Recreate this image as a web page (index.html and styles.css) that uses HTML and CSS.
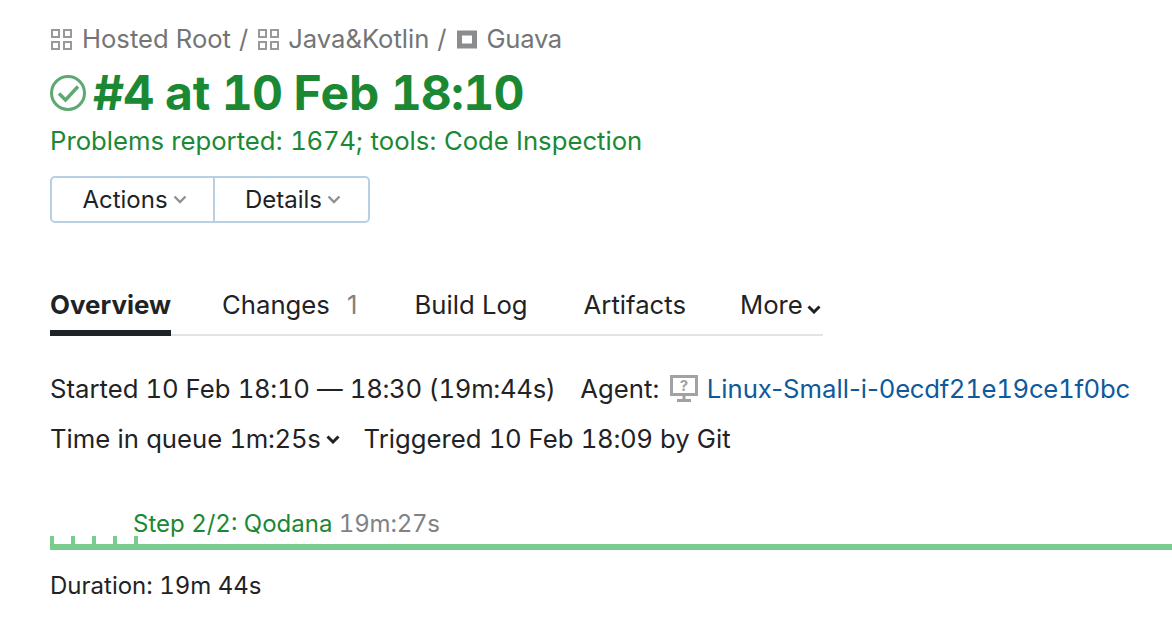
FILE: index.html
```html
<!DOCTYPE html>
<html lang="en">
<head>
<meta charset="utf-8">
<title>Guava #4</title>
<link rel="stylesheet" href="styles.css">
</head>
<body>
<main class="page">
  <nav class="crumbs">
    <svg class="crumb-icon" viewBox="0 0 21 21"><path class="grid-icon" d="M1 1h7v7H1zM13 1h7v7h-7zM1 13h7v7H1zM13 13h7v7h-7z"/></svg>
    <span>Hosted Root</span><span class="sep">/</span>
    <svg class="crumb-icon" viewBox="0 0 21 21"><path class="grid-icon" d="M1 1h7v7H1zM13 1h7v7h-7zM1 13h7v7H1zM13 13h7v7h-7z"/></svg>
    <span>Java&amp;Kotlin</span><span class="sep">/</span>
    <svg class="crumb-icon" viewBox="0 0 21 21"><rect class="box-icon" x="2.500" y="4" width="15" height="13"/></svg>
    <span class="crumb-last">Guava</span>
  </nav>
  <h1 class="title">
    <svg class="status-icon" viewBox="0 0 36 36"><circle cx="18" cy="18" r="16.500" class="status-ring"/><path class="status-check" d="M9 18.500l6.500 6.500L28 11.500"/></svg>
    <span><span class="big-num">#4</span> at <span class="big-num">10</span> Feb <span class="big-num">18:10</span></span>
  </h1>
  <p class="status-text">Problems reported: <span class="num">1674</span>; tools: Code Inspection</p>
  <div class="btn-group">
    <button class="btn btn-first">Actions<svg class="caret caret-grey" viewBox="0 0 14 9"><path d="M1.500 1.500L7 7l5.500-5.500"/></svg></button>
    <button class="btn btn-last">Details<svg class="caret caret-grey" viewBox="0 0 14 9"><path d="M1.500 1.500L7 7l5.500-5.500"/></svg></button>
  </div>
  <div class="tabs">
    <a class="tab tab-active">Overview</a>
    <a class="tab">Changes <span class="count">1</span></a>
    <a class="tab tab-log">Build Log</a>
    <a class="tab tab-artifacts">Artifacts</a>
    <a class="tab tab-more">More<svg class="caret caret-dark" viewBox="0 0 14 9"><path d="M1.500 1.500L7 7l5.500-5.500"/></svg></a>
  </div>
  <div class="info-row info-first">
    <span class="started">Started <span class="num">10</span> Feb <span class="num">18:10</span> — <span class="num">18:30</span> (<span class="num">19m:44s</span>)</span>
    <span>Agent:</span>
    <svg class="agent-icon" viewBox="0 0 28 28"><path class="agent-frame" d="M1.500 1.500h25v18h-25z"/><path class="agent-stand" d="M12.500 20h3v4h-3zM7 24h14v3H7z"/><text x="14" y="16" class="agent-q">?</text></svg>
    <a class="link">Linux-Small-i-<span class="num">0ecdf21e19ce1f0bc</span></a>
  </div>
  <div class="info-row info-second">
    <span class="queue">Time in queue <span class="num">1m:25s</span><svg class="caret caret-dark" viewBox="0 0 14 9"><path d="M1.500 1.500L7 7l5.500-5.500"/></svg></span>
    <span>Triggered <span class="num">10</span> Feb <span class="num">18:09</span> by Git</span>
  </div>
  <div class="timeline">
    <div class="step-label"><span class="step-name">Step 2/2: Qodana</span> <span class="step-time">19m:27s</span></div>
    <div class="ticks"><i></i><i></i><i></i><i></i><i></i></div>
    <div class="bar"></div>
  </div>
  <p class="duration">Duration: 19m 44s</p>
</main>
</body>
</html>
```
FILE: styles.css
```css
* { box-sizing: border-box; }
html, body { margin: 0; background: #fff; }
body {
  font-family: Inter, "Liberation Sans", sans-serif;
  font-size: 25.700px;
  line-height: 32px;
  color: #1f2326;
  overflow: hidden;
  height: 642px;
}
.page { padding: 23px 0 0 50px; }
.num { font-variant-numeric: tabular-nums; letter-spacing: -0.300px; }
.crumbs {
  display: flex;
  align-items: center;
  height: 32px;
  gap: 8px;
  color: #737577;
  font-size: 25.600px;
}
.crumb-icon { width: 21px; height: 21px; flex: none; margin-left: 2px; margin-right: 1px; }
.crumb-icon:first-child { margin-left: 1px; margin-right: 2px; }
.crumb-last { letter-spacing: -0.300px; }
.grid-icon { fill: none; stroke: #97999b; stroke-width: 2; }
.box-icon { fill: none; stroke: #8a8c8e; stroke-width: 5; }
.title {
  display: flex;
  align-items: center;
  margin: 7px 0 0;
  font-size: 48px;
  line-height: 62px;
  font-weight: 700;
  color: #1b8833;
  gap: 7px;
}
.big-num { font-variant-numeric: tabular-nums; letter-spacing: -0.800px; }
.status-icon { width: 36px; height: 36px; flex: none; }
.status-ring { fill: none; stroke: #5fa872; stroke-width: 3; }
.status-check { fill: none; stroke: #5fa872; stroke-width: 3.500; }
.status-text { margin: -1px 0 0; color: #1b8833; height: 35px; line-height: 35px; }
.btn-group { display: flex; margin-top: 18px; width: 320px; height: 47px; font-size: 24px; }
.btn {
  font: inherit;
  color: inherit;
  background: #fff;
  border: 2px solid #b7d0e3;
  display: flex;
  align-items: center;
  justify-content: center;
  gap: 5px;
  padding: 0 0 0 4px;
}
.btn-first { width: 165px; border-radius: 5px 0 0 5px; }
.btn-last { width: 155px; border-left: 0; border-radius: 0 5px 5px 0; padding-left: 3px; }
.caret { width: 14px; height: 9px; flex: none; fill: none; }
.caret-grey { stroke: #8f9193; stroke-width: 2.400; }
.caret-dark { stroke: #1f2326; stroke-width: 3; }
.tabs {
  display: flex;
  width: 773px;
  margin-top: 57px;
  height: 56px;
  border-bottom: 2px solid #e1e3e6;
  gap: 51px;
}
.tab { height: 56px; padding-top: 9px; white-space: nowrap; }
.tab-active { font-weight: 700; font-size: 25.900px; border-bottom: 6px solid #1f2326; }
.tab-log { margin-left: 6px; }
.tab-artifacts { margin-left: 5px; }
.tab-more { display: flex; align-items: baseline; gap: 4px; margin-left: 3px; }
.count { color: #808285; margin-left: 10px; }
.info-row { display: flex; align-items: center; height: 32px; white-space: nowrap; }
.info-first { margin-top: 37px; }
.info-second { margin-top: 18px; }
.started { margin-right: 25px; }
.agent-icon { width: 28px; height: 28px; flex: none; margin: 0 9px 0 10px; }
.agent-frame { fill: none; stroke: #a0a2a4; stroke-width: 3; }
.agent-stand { fill: #a0a2a4; }
.agent-q { font-size: 15px; font-weight: 700; fill: #a0a2a4; text-anchor: middle; }
.link { color: #0e5a9c; }
.queue { display: flex; align-items: center; margin-right: 24px; white-space: pre; }
.queue .caret { margin-left: 5px; }
.timeline { margin-top: 49px; }
.step-label { margin-left: 83px; height: 32px; padding-top: 11px; line-height: 18px; font-size: 24px; font-variant-numeric: tabular-nums; }
.step-name { color: #1b8833; }
.step-time { color: #808285; letter-spacing: -0.200px; }
.ticks { display: flex; gap: 17px; height: 8px; }
.ticks i { width: 4px; height: 8px; background: #7acb8e; }
.bar { height: 6px; background: #7acb8e; }
.duration { margin: 20px 0 0; font-size: 24px; font-variant-numeric: tabular-nums; }
```
